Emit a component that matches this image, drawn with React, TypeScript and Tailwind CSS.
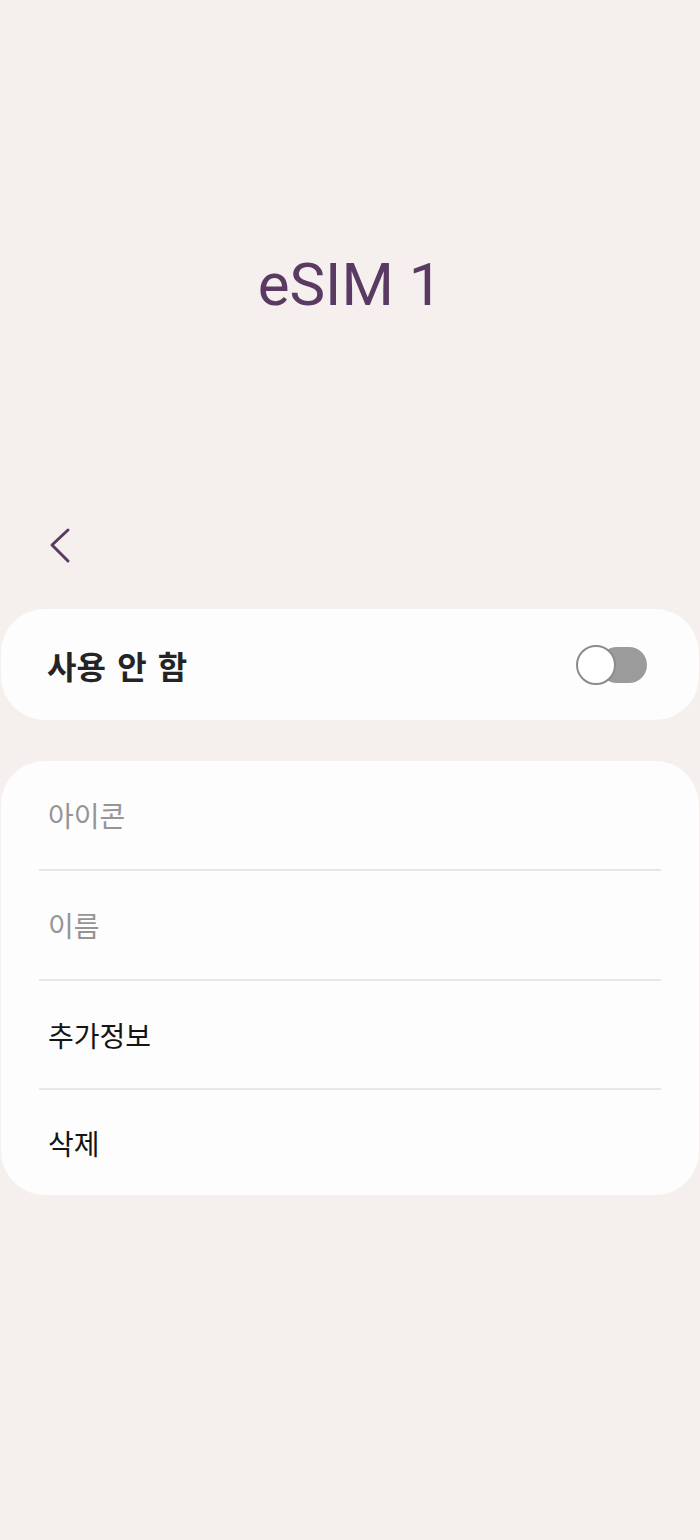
const Row = ({ label, muted, h }: { label: string; muted?: boolean; h: string }) => (
  <div className={`${h} flex items-center pl-[47px]`}>
    <span className={`text-[28px] leading-none ${muted ? "text-[#959595]" : "text-[#141414]"}`}>{label}</span>
  </div>
);

const Divider = () => <div className="mx-[38px] h-[2px] bg-[#e8e6e6]" />;

const App = () => {
  return (
    <div
      className="min-h-[1540px] bg-[#f5f0ed]"
      style={{ fontFamily: '"Noto Sans CJK KR", "Noto Sans", sans-serif' }}
    >
      <div className="pt-[255px]">
        <h1 className="text-center text-[60px] leading-none text-[#5a3a62] font-['Roboto',sans-serif]">eSIM 1</h1>
      </div>

      <div className="mt-[212px] pl-[48px] h-[40px]">
        <svg width="26" height="40" viewBox="0 0 26 40" fill="none">
          <path d="M20 3 L4 18 L20 34" stroke="#5a3a62" strokeWidth="3" strokeLinecap="round" strokeLinejoin="round" />
        </svg>
      </div>

      <div className="mt-[42px] mx-px h-[111px] rounded-[44px] bg-[#fdfdfd] flex items-center justify-between pl-[46px] pr-[52px]">
        <span className="text-[32px] leading-none font-bold text-[#242424] [word-spacing:4px]">사용 안 함</span>
        <div className="relative w-[71px] h-[40px]">
          <div className="absolute right-0 top-[2px] w-[48px] h-[36px] rounded-full bg-[#9b9b9b]" />
          <div className="absolute left-0 top-0 w-[40px] h-[40px] rounded-full bg-white border-2 border-[#8c8c8c]" />
        </div>
      </div>

      <div className="mt-[41px] mx-px rounded-[44px] bg-[#fdfdfd]">
        <Row label="아이콘" muted h="h-[108px]" />
        <Divider />
        <Row label="이름" muted h="h-[108px]" />
        <Divider />
        <Row label="추가정보" h="h-[107px]" />
        <Divider />
        <Row label="삭제" h="h-[105px]" />
      </div>
    </div>
  );
};

export default App;
